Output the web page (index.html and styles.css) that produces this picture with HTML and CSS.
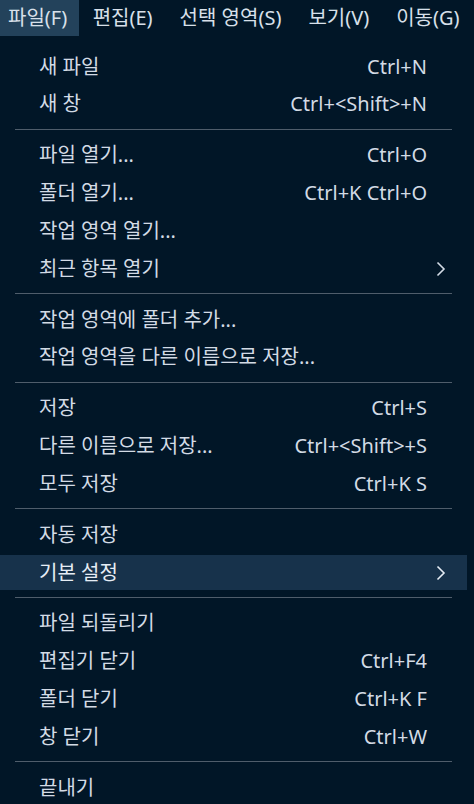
FILE: index.html
```html
<!DOCTYPE html>
<html lang="ko">
<head>
<meta charset="utf-8">
<link rel="stylesheet" href="styles.css">
</head>
<body>
<div class="menubar">
  <div class="mb-item active">파일(F)</div>
  <div class="mb-item">편집(E)</div>
  <div class="mb-item">선택 영역(S)</div>
  <div class="mb-item">보기(V)</div>
  <div class="mb-item">이동(G)</div>
</div>
<div class="menu">
  <div class="item"><span class="label">새 파일</span><span class="key">Ctrl+N</span></div>
  <div class="item"><span class="label">새 창</span><span class="key">Ctrl+&lt;Shift&gt;+N</span></div>
  <div class="sep"></div>
  <div class="item"><span class="label">파일 열기...</span><span class="key">Ctrl+O</span></div>
  <div class="item"><span class="label">폴더 열기...</span><span class="key">Ctrl+K Ctrl+O</span></div>
  <div class="item"><span class="label">작업 영역 열기...</span></div>
  <div class="item"><span class="label">최근 항목 열기</span><svg class="chev" width="10" height="16" viewBox="0 0 10 16"><polyline points="1.5,1.5 8,8 1.5,14.5" fill="none" stroke="currentColor" stroke-width="1.6"/></svg></div>
  <div class="sep"></div>
  <div class="item"><span class="label">작업 영역에 폴더 추가...</span></div>
  <div class="item"><span class="label">작업 영역을 다른 이름으로 저장...</span></div>
  <div class="sep"></div>
  <div class="item"><span class="label">저장</span><span class="key">Ctrl+S</span></div>
  <div class="item"><span class="label">다른 이름으로 저장...</span><span class="key">Ctrl+&lt;Shift&gt;+S</span></div>
  <div class="item"><span class="label">모두 저장</span><span class="key">Ctrl+K S</span></div>
  <div class="sep"></div>
  <div class="item"><span class="label">자동 저장</span></div>
  <div class="item selected"><span class="label">기본 설정</span><svg class="chev" width="10" height="16" viewBox="0 0 10 16"><polyline points="1.5,1.5 8,8 1.5,14.5" fill="none" stroke="currentColor" stroke-width="1.6"/></svg></div>
  <div class="sep"></div>
  <div class="item"><span class="label">파일 되돌리기</span></div>
  <div class="item"><span class="label">편집기 닫기</span><span class="key">Ctrl+F4</span></div>
  <div class="item"><span class="label">폴더 닫기</span><span class="key">Ctrl+K F</span></div>
  <div class="item"><span class="label">창 닫기</span><span class="key">Ctrl+W</span></div>
  <div class="sep"></div>
  <div class="item"><span class="label">끝내기</span></div>
</div>
</body>
</html>
```
FILE: styles.css
```css
html, body {
  margin: 0;
  padding: 0;
  background: #011627;
  color: #d3dbe5;
  font-family: "Noto Sans", "Noto Sans CJK KR", sans-serif;
  font-size: 20px;
  height: 804px;
  overflow: hidden;
}

.menubar {
  display: flex;
  height: 36px;
  align-items: stretch;
}

.mb-item {
  display: flex;
  align-items: center;
  padding: 0 13.5px;
  line-height: 1;
  color: #d8e0ea;
}

.mb-item:first-child {
  padding-left: 8px;
  padding-right: 12px;
}

.mb-item.active {
  background: #23425b;
}

.menu {
  display: flex;
  flex-direction: column;
  width: 467px;
  padding-top: 11px;
}

.item {
  display: flex;
  align-items: center;
  height: 35px;
  margin: 2px 0 0.85px;
  padding: 0 40px 0 39px;
  line-height: 1;
}

.item.selected {
  background: #17324b;
  color: #e6edf5;
}

.label {
  flex: 1;
  white-space: nowrap;
}

.key {
  white-space: nowrap;
}

.chev {
  margin-right: -19px;
  display: block;
}

.sep {
  height: 1px;
  margin: 6px 15px 6px 15px;
  background: #4f5d6b;
}
```
